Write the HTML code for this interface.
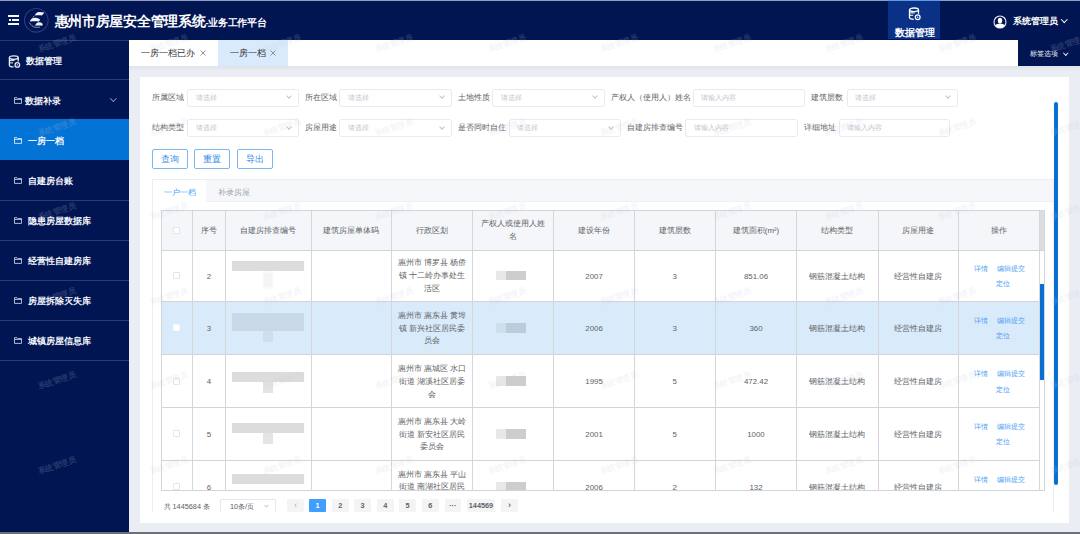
<!DOCTYPE html><html><head><meta charset="utf-8"><style>
*{box-sizing:border-box;margin:0;padding:0}
html,body{width:1080px;height:534px;overflow:hidden;background:#eaedf3;font-family:"Liberation Sans",sans-serif;color:#606266}
.a{position:absolute}
.nw{white-space:nowrap}
.mi{position:absolute;left:0;width:128.5px;height:40px;color:#f4f6fb;font-size:9px;font-weight:bold;white-space:nowrap}
.mi .t{position:absolute;left:27.5px;top:0.8px;line-height:40px}
.sep{position:absolute;left:0;width:128.5px;height:1px;background:#2a3a7a}
.fold{position:absolute;left:14px;top:17.3px;width:8px;height:7px}
.lbl{position:absolute;font-size:7.9px;line-height:18px;color:#606266;white-space:nowrap}
.inp{position:absolute;height:18px;border:1px solid #e8eaef;border-radius:2.5px;background:#fff;font-size:7.4px;line-height:16px;color:#c0c4cc;padding-left:7.8px;white-space:nowrap}
.chev{position:absolute;width:4px;height:4px;border-right:1px solid #c0c4cc;border-bottom:1px solid #c0c4cc;transform:rotate(45deg)}
.btn{position:absolute;top:149px;height:20px;border:1px solid #7db6ee;border-radius:2px;background:#fff;color:#2f8ae6;font-size:8.5px;line-height:18px;text-align:center}
.hl{position:absolute;height:1px;background:#d2d4d8}
.vl{position:absolute;width:1px;background:#d5d6da}
.cell{position:absolute;display:flex;align-items:center;justify-content:center;text-align:center;font-size:7.9px;line-height:12.9px;color:#606266;white-space:nowrap}
.pg{position:absolute;top:499px;height:12.5px;width:17px;background:#f4f4f5;border-radius:1px;font-size:7.3px;line-height:13.5px;text-align:center;color:#606266;font-weight:bold}
.lnk{color:#4ea0f5}
.cb{position:absolute;width:7px;height:7px;border:1px solid #e3e5ea;border-radius:1px;background:#fff}
</style></head><body>
<div class="a" style="left:0;top:0;width:1080px;height:40px;background:#011552"></div>
<div class="a" style="left:0;top:0;width:1080px;height:1px;background:#8f9cbd"></div>
<div class="a" style="left:8.4px;top:15.1px;width:10.8px;height:2.1px;background:#f4f6fd"></div>
<div class="a" style="left:8.4px;top:22.9px;width:10.8px;height:2.1px;background:#f4f6fd"></div>
<div class="a" style="left:9.3px;top:19px;width:1.7px;height:2.1px;background:#f4f6fd"></div>
<div class="a" style="left:12px;top:19px;width:7.2px;height:2.1px;background:#f4f6fd"></div>
<svg class="a" style="left:20px;top:4px" width="32" height="32" viewBox="0 0 32 32">
<circle cx="16.3" cy="16.3" r="11.8" fill="none" stroke="#2b3d80" stroke-width="1.1"/>
<path d="M14.8 11.6 C15.6 9.4 17 8.3 19 8.1 C20.8 8 22.6 8.2 24.2 8.6 C23.6 9.8 22.8 10.8 21.8 11.5 C19.5 11.2 17 11.2 14.8 11.6 Z" fill="#eef2fb"/>
<path d="M9.8 17.6 C10.6 15.3 12.2 14 14.5 13.8 C16.6 13.7 18.6 14.3 20 15.6 C19.8 16.6 19.4 17.2 18.8 17.5 C16 17 12.8 17 9.8 17.6 Z" fill="#f2f5fc"/>
<path d="M15.2 21.8 C15.8 19.6 17 18.4 18.8 18.3 C20.4 18.2 21.8 18.8 22.8 20 C22.8 20.8 22.5 21.4 22 21.7 C19.8 21.4 17.4 21.4 15.2 21.8 Z" fill="#e8edf8"/>
<path d="M14.2 11.8 C13.6 12.6 13.2 13.2 12.6 13.6" stroke="#aab6da" stroke-width="0.9" fill="none"/>
<path d="M9.4 18.6 C10.6 21 12.6 22.6 15 23.2 C16.6 23.5 18.4 23.4 20 23" stroke="#8e9cc8" stroke-width="0.9" fill="none"/>
</svg>
<div class="a nw" style="left:54.5px;top:13px;color:#fff;font-weight:bold;font-size:13.5px;letter-spacing:-0.28px;line-height:17px">惠州市房屋安全管理系统<span style="font-size:9.6px;letter-spacing:-0.3px">-业务工作平台</span></div>
<div class="a" style="left:888px;top:0;width:51.5px;height:39px;background:#0a3185"></div>
<div class="a" style="left:888px;top:0;width:51.5px;height:1px;background:#5f9be0"></div>
<svg class="a" style="left:907.5px;top:6.8px" width="14" height="14" viewBox="0 0 14 14">
<ellipse cx="6" cy="2.8" rx="4.5" ry="1.8" fill="none" stroke="#fff" stroke-width="1.3"/>
<path d="M1.5 2.8 V10.6 C1.5 11.6 3.4 12.3 5.8 12.4" fill="none" stroke="#fff" stroke-width="1.3"/>
<path d="M10.5 2.8 V6.8" fill="none" stroke="#fff" stroke-width="1.3"/>
<path d="M1.5 5.9 H6.8 M1.5 8.3 H5.2" fill="none" stroke="#fff" stroke-width="1"/>
<circle cx="9.7" cy="10.3" r="2.4" fill="none" stroke="#fff" stroke-width="1.2"/>
<circle cx="9.7" cy="10.3" r="0.7" fill="#fff"/>
</svg>
<div class="a nw" style="left:895px;top:27px;color:#fff;font-weight:bold;font-size:9.8px;line-height:12px">数据管理</div>
<svg class="a" style="left:993.3px;top:14.7px" width="14" height="14" viewBox="0 0 14 14">
<circle cx="7" cy="7" r="6" fill="none" stroke="#e9eefa" stroke-width="1.1"/>
<ellipse cx="7" cy="5.6" rx="2.2" ry="2.9" fill="#fff"/>
<path d="M2.2 10.8 C3 9.3 4.6 8.5 7 8.5 C9.4 8.5 11 9.3 11.8 10.8 C10.7 12.2 9 12.9 7 12.9 C5 12.9 3.3 12.2 2.2 10.8 Z" fill="#fff"/>
</svg>
<div class="a nw" style="left:1012.5px;top:15px;color:#fff;font-size:8.8px;line-height:12px;font-weight:bold">系统管理员</div>
<div class="a" style="left:1061.8px;top:17px;width:4.5px;height:4.5px;border-right:1.2px solid #fff;border-bottom:1.2px solid #fff;transform:rotate(45deg)"></div>
<div class="a" style="left:0;top:40px;width:129px;height:494px;background:#011552"></div>
<div class="a" style="left:0;top:39.6px;width:129px;height:1.2px;background:#283978"></div>
<svg class="a" style="left:7.5px;top:54.5px" width="13" height="13" viewBox="0 0 13 13">
<ellipse cx="5.8" cy="2.6" rx="4.4" ry="1.7" fill="none" stroke="#eef1fa" stroke-width="1.3"/>
<path d="M1.4 2.6 V10.2 C1.4 11.1 3.2 11.8 5.6 11.9" fill="none" stroke="#eef1fa" stroke-width="1.3"/>
<path d="M10.2 2.6 V6.6" fill="none" stroke="#eef1fa" stroke-width="1.3"/>
<path d="M1.4 5.6 H6.5 M1.4 7.9 H5" fill="none" stroke="#eef1fa" stroke-width="1"/>
<circle cx="9.3" cy="9.9" r="2.3" fill="none" stroke="#eef1fa" stroke-width="1.2"/>
<circle cx="9.3" cy="9.9" r="0.7" fill="#eef1fa"/>
</svg>
<div class="a nw" style="left:25.5px;top:55px;color:#f4f6fb;font-size:9px;font-weight:bold;line-height:12px">数据管理</div>
<div class="sep" style="top:79px"></div>
<div class="mi" style="top:80px"><svg class="fold" viewBox="0 0 8 7"><path d="M0.5 0.7 H3 L3.8 1.6 H7.5 V6.4 H0.5 Z M0.5 2.4 H7.5" fill="none" stroke="#cdd4e8" stroke-width="0.85"/></svg><div class="t" style="left:25px">数据补录</div></div>
<div class="a" style="left:110.5px;top:95.6px;width:4.6px;height:4.6px;border-right:1.3px solid #8795cc;border-bottom:1.3px solid #8795cc;transform:rotate(45deg)"></div>
<div class="sep" style="top:118.5px"></div>
<div class="a" style="left:0;top:119px;width:128.5px;height:41px;background:#0373d5"></div>
<div class="mi" style="top:120px"><svg class="fold" viewBox="0 0 8 7"><path d="M0.5 0.7 H3 L3.8 1.6 H7.5 V6.4 H0.5 Z M0.5 2.4 H7.5" fill="none" stroke="#e8f0fb" stroke-width="0.85"/></svg><div class="t">一房一档</div></div>
<div class="mi" style="top:160px"><svg class="fold" viewBox="0 0 8 7"><path d="M0.5 0.7 H3 L3.8 1.6 H7.5 V6.4 H0.5 Z M0.5 2.4 H7.5" fill="none" stroke="#cdd4e8" stroke-width="0.85"/></svg><div class="t">自建房台账</div></div>
<div class="sep" style="top:199.5px"></div>
<div class="mi" style="top:200px"><svg class="fold" viewBox="0 0 8 7"><path d="M0.5 0.7 H3 L3.8 1.6 H7.5 V6.4 H0.5 Z M0.5 2.4 H7.5" fill="none" stroke="#cdd4e8" stroke-width="0.85"/></svg><div class="t">隐患房屋数据库</div></div>
<div class="sep" style="top:239.5px"></div>
<div class="mi" style="top:240px"><svg class="fold" viewBox="0 0 8 7"><path d="M0.5 0.7 H3 L3.8 1.6 H7.5 V6.4 H0.5 Z M0.5 2.4 H7.5" fill="none" stroke="#cdd4e8" stroke-width="0.85"/></svg><div class="t">经营性自建房库</div></div>
<div class="sep" style="top:279.5px"></div>
<div class="mi" style="top:280px"><svg class="fold" viewBox="0 0 8 7"><path d="M0.5 0.7 H3 L3.8 1.6 H7.5 V6.4 H0.5 Z M0.5 2.4 H7.5" fill="none" stroke="#cdd4e8" stroke-width="0.85"/></svg><div class="t">房屋拆除灭失库</div></div>
<div class="sep" style="top:319.5px"></div>
<div class="mi" style="top:320px"><svg class="fold" viewBox="0 0 8 7"><path d="M0.5 0.7 H3 L3.8 1.6 H7.5 V6.4 H0.5 Z M0.5 2.4 H7.5" fill="none" stroke="#cdd4e8" stroke-width="0.85"/></svg><div class="t">城镇房屋信息库</div></div>
<div class="sep" style="top:359.5px"></div>
<div class="a" style="left:129px;top:40px;width:889px;height:26px;background:#fff"></div>
<div class="a nw" style="left:141px;top:47px;font-size:9px;line-height:12px;color:#303133">一房一档已办</div>
<svg class="a" style="left:200px;top:50px" width="6" height="6" viewBox="0 0 6 6"><path d="M0.5 0.5 L5.5 5.5 M5.5 0.5 L0.5 5.5" stroke="#777" stroke-width="0.8"/></svg>
<div class="a" style="left:218px;top:40px;width:70px;height:26px;background:#d8eafb"></div>
<div class="a nw" style="left:229.5px;top:47px;font-size:9px;line-height:12px;color:#303133">一房一档</div>
<svg class="a" style="left:269.5px;top:50px" width="6" height="6" viewBox="0 0 6 6"><path d="M0.5 0.5 L5.5 5.5 M5.5 0.5 L0.5 5.5" stroke="#777" stroke-width="0.8"/></svg>
<div class="a" style="left:1018px;top:40px;width:62px;height:26px;background:#011552"></div>
<div class="a nw" style="left:1030px;top:49px;font-size:6.8px;line-height:10px;color:#e8ecf5">标签选项</div>
<div class="a" style="left:1063.8px;top:50.8px;width:3.5px;height:3.5px;border-right:1px solid #e8ecf5;border-bottom:1px solid #e8ecf5;transform:rotate(45deg)"></div>
<div class="a" style="left:129px;top:66px;width:951px;height:466px;background:#eaedf3"></div>
<div class="a" style="left:129px;top:66px;width:951px;height:5px;background:linear-gradient(#dfe2e9,#eaedf3)"></div>
<div class="a" style="left:140px;top:77px;width:929px;height:446px;background:#fff"></div>
<div class="a" style="left:0;top:532px;width:1080px;height:2px;background:#6b6f78"></div>
<div class="lbl" style="left:152px;top:88.7px">所属区域</div>
<div class="inp" style="left:187px;top:88.7px;width:112.3px">请选择<div class="chev" style="right:7px;top:4.5px"></div></div>
<div class="lbl" style="left:305px;top:88.7px">所在区域</div>
<div class="inp" style="left:339.4px;top:88.7px;width:112.3px">请选择<div class="chev" style="right:7px;top:4.5px"></div></div>
<div class="lbl" style="left:457.8px;top:88.7px">土地性质</div>
<div class="inp" style="left:492.4px;top:88.7px;width:112.6px">请选择<div class="chev" style="right:7px;top:4.5px"></div></div>
<div class="lbl" style="left:611px;top:88.7px">产权人（使用人）姓名</div>
<div class="inp" style="left:692.7px;top:88.7px;width:112.6px">请输入内容</div>
<div class="lbl" style="left:811.3px;top:88.7px">建筑层数</div>
<div class="inp" style="left:846.5px;top:88.7px;width:111.5px">请选择<div class="chev" style="right:7px;top:4.5px"></div></div>
<div class="lbl" style="left:152px;top:119px">结构类型</div>
<div class="inp" style="left:187px;top:119px;width:112.3px">请选择<div class="chev" style="right:7px;top:4.5px"></div></div>
<div class="lbl" style="left:305px;top:119px">房屋用途</div>
<div class="inp" style="left:339.4px;top:119px;width:112.3px">请选择<div class="chev" style="right:7px;top:4.5px"></div></div>
<div class="lbl" style="left:457.8px;top:119px">是否同时自住</div>
<div class="inp" style="left:508.7px;top:119px;width:112px">请选择<div class="chev" style="right:7px;top:4.5px"></div></div>
<div class="lbl" style="left:626.7px;top:119px">自建房排查编号</div>
<div class="inp" style="left:685.3px;top:119px;width:112.3px">请输入内容</div>
<div class="lbl" style="left:803.6px;top:119px">详细地址</div>
<div class="inp" style="left:838.5px;top:119px;width:111.7px">请输入内容</div>
<div class="btn" style="left:152px;width:35.5px">查询</div>
<div class="btn" style="left:194.2px;width:35.5px">重置</div>
<div class="btn" style="left:237.2px;width:35.5px">导出</div>
<div class="a" style="left:152px;top:179px;width:902px;height:333px;border:1px solid #eceef2;border-bottom:none"></div>
<div class="a" style="left:153px;top:180px;width:900px;height:21.5px;background:#f5f7fa;border-bottom:1px solid #eef0f3"></div>
<div class="a" style="left:153px;top:180px;width:53px;height:22px;background:#fff"></div>
<div class="a nw" style="left:164px;top:187px;font-size:7.9px;line-height:11px;color:#409eff">一户一档</div>
<div class="a nw" style="left:218px;top:187px;font-size:7.9px;line-height:11px;color:#a0a3a8">补录房屋</div>
<div class="a" style="left:161.1px;top:210.2px;width:883.4px;height:40.10000000000002px;background:#f5f6f9"></div>
<div class="a" style="left:161.1px;top:301.4px;width:878.6px;height:53.200000000000045px;background:#d9ebfb"></div>
<div class="a" style="left:1039.7px;top:210.2px;width:4.7999999999999545px;height:40.10000000000002px;background:#dcdde0"></div>
<div class="a" style="left:1039.7px;top:250.3px;width:4.7999999999999545px;height:240.59999999999997px;background:#fff"></div>
<div class="a" style="left:1040px;top:283.7px;width:3.8px;height:96px;background:#0a6fd3;border-radius:0"></div>
<div class="cb" style="left:172.6px;top:226.7px"></div>
<div class="cell" style="left:192.3px;top:210.2px;width:33.39999999999998px;height:40.10000000000002px;padding-top:1.5px">序号</div>
<div class="cell" style="left:225.7px;top:210.2px;width:85.30000000000001px;height:40.10000000000002px;padding-top:1.5px">自建房排查编号</div>
<div class="cell" style="left:311px;top:210.2px;width:80.69999999999999px;height:40.10000000000002px;padding-top:1.5px">建筑房屋单体码</div>
<div class="cell" style="left:391.7px;top:210.2px;width:80.69999999999999px;height:40.10000000000002px;padding-top:1.5px">行政区划</div>
<div class="cell" style="left:472.4px;top:210.2px;width:81.30000000000007px;height:40.10000000000002px;padding-top:1.5px">产权人或使用人姓<br>名</div>
<div class="cell" style="left:553.7px;top:210.2px;width:80.69999999999993px;height:40.10000000000002px;padding-top:1.5px">建设年份</div>
<div class="cell" style="left:634.4px;top:210.2px;width:80.80000000000007px;height:40.10000000000002px;padding-top:1.5px">建筑层数</div>
<div class="cell" style="left:715.2px;top:210.2px;width:81.59999999999991px;height:40.10000000000002px;padding-top:1.5px">建筑面积(m²)</div>
<div class="cell" style="left:796.8px;top:210.2px;width:81.20000000000005px;height:40.10000000000002px;padding-top:1.5px">结构类型</div>
<div class="cell" style="left:878px;top:210.2px;width:80.5px;height:40.10000000000002px;padding-top:1.5px">房屋用途</div>
<div class="cell" style="left:958.5px;top:210.2px;width:81.20000000000005px;height:40.10000000000002px;padding-top:1.5px">操作</div>
<div class="a" style="left:161.1px;top:250.3px;width:883.4px;height:240.59999999999997px;overflow:hidden">
<div class="cb" style="left:11.5px;top:22.049999999999983px;"></div>
<div class="a" style="left:71.30000000000001px;top:10.399999999999977px;width:71.5px;height:10px;background:#dcdcdc;filter:blur(0.5px)"></div>
<div class="a" style="left:101.9px;top:21.399999999999977px;width:10.5px;height:16px;background:#f4f4f4;filter:blur(0.8px)"></div>
<div class="cell" style="left:230.6px;top:0.0px;width:80.69999999999999px;height:51.099999999999966px;padding-top:2px">惠州市 博罗县 杨侨<br>镇 十二岭办事处生<br>活区</div>
<div class="a" style="left:335.20000000000005px;top:20.94999999999998px;width:9.7px;height:9.2px;background:#e8e8e8;filter:blur(0.5px)"></div>
<div class="a" style="left:344.9px;top:20.94999999999998px;width:20.4px;height:9.2px;background:#cdcdcd;filter:blur(0.5px)"></div>
<div class="cell" style="left:31.200000000000017px;top:0.0px;width:33.39999999999998px;height:51.099999999999966px;padding-top:2.5px">2</div>
<div class="cell" style="left:392.6px;top:0.0px;width:80.69999999999993px;height:51.099999999999966px;padding-top:2.5px">2007</div>
<div class="cell" style="left:473.29999999999995px;top:0.0px;width:80.80000000000007px;height:51.099999999999966px;padding-top:2.5px">3</div>
<div class="cell" style="left:554.1px;top:0.0px;width:81.59999999999991px;height:51.099999999999966px;padding-top:2.5px">851.06</div>
<div class="cell" style="left:635.6999999999999px;top:0.0px;width:81.20000000000005px;height:51.099999999999966px;padding-top:2.5px">钢筋混凝土结构</div>
<div class="cell" style="left:716.9px;top:0.0px;width:80.5px;height:51.099999999999966px;padding-top:2.5px">经营性自建房</div>
<div class="a nw lnk" style="left:812.9px;top:12.549999999999983px;font-size:6.8px;line-height:11px">详情</div>
<div class="a nw lnk" style="left:835.8px;top:12.549999999999983px;font-size:6.8px;line-height:11px">编辑提交</div>
<div class="a nw lnk" style="left:834.6px;top:28.049999999999983px;font-size:6.8px;line-height:11px">定位</div>
<div class="cb" style="left:11.5px;top:74.19999999999999px;background:#fff;border-color:#f4f8fc"></div>
<div class="a" style="left:71.30000000000001px;top:62.599999999999966px;width:71.5px;height:18.5px;background:#c9d8e6;filter:blur(0.5px)"></div>
<div class="a" style="left:101.9px;top:81.09999999999997px;width:10.5px;height:11px;background:#c9d8e6;opacity:0.6;filter:blur(0.6px)"></div>
<div class="cell" style="left:230.6px;top:51.099999999999966px;width:80.69999999999999px;height:53.200000000000045px;padding-top:2px">惠州市 惠东县 黄埠<br>镇 新兴社区居民委<br>员会</div>
<div class="a" style="left:335.20000000000005px;top:73.1px;width:9.7px;height:9.2px;background:#cfdeec;filter:blur(0.5px)"></div>
<div class="a" style="left:344.9px;top:73.1px;width:20.4px;height:9.2px;background:#bcccdc;filter:blur(0.5px)"></div>
<div class="cell" style="left:31.200000000000017px;top:51.099999999999966px;width:33.39999999999998px;height:53.200000000000045px;padding-top:2.5px">3</div>
<div class="cell" style="left:392.6px;top:51.099999999999966px;width:80.69999999999993px;height:53.200000000000045px;padding-top:2.5px">2006</div>
<div class="cell" style="left:473.29999999999995px;top:51.099999999999966px;width:80.80000000000007px;height:53.200000000000045px;padding-top:2.5px">3</div>
<div class="cell" style="left:554.1px;top:51.099999999999966px;width:81.59999999999991px;height:53.200000000000045px;padding-top:2.5px">360</div>
<div class="cell" style="left:635.6999999999999px;top:51.099999999999966px;width:81.20000000000005px;height:53.200000000000045px;padding-top:2.5px">钢筋混凝土结构</div>
<div class="cell" style="left:716.9px;top:51.099999999999966px;width:80.5px;height:53.200000000000045px;padding-top:2.5px">经营性自建房</div>
<div class="a nw lnk" style="left:812.9px;top:64.69999999999999px;font-size:6.8px;line-height:11px">详情</div>
<div class="a nw lnk" style="left:835.8px;top:64.69999999999999px;font-size:6.8px;line-height:11px">编辑提交</div>
<div class="a nw lnk" style="left:834.6px;top:80.19999999999999px;font-size:6.8px;line-height:11px">定位</div>
<div class="cb" style="left:11.5px;top:127.30000000000001px;"></div>
<div class="a" style="left:71.30000000000001px;top:121.69999999999999px;width:71.5px;height:10px;background:#dcdcdc;filter:blur(0.5px)"></div>
<div class="a" style="left:101.9px;top:131.7px;width:10.5px;height:11px;background:#dcdcdc;opacity:0.75;filter:blur(0.6px)"></div>
<div class="cell" style="left:230.6px;top:104.30000000000001px;width:80.69999999999999px;height:53.0px;padding-top:2px">惠州市 惠城区 水口<br>街道 湖溪社区居委<br>会</div>
<div class="a" style="left:335.20000000000005px;top:126.20000000000002px;width:9.7px;height:9.2px;background:#e8e8e8;filter:blur(0.5px)"></div>
<div class="a" style="left:344.9px;top:126.20000000000002px;width:20.4px;height:9.2px;background:#cdcdcd;filter:blur(0.5px)"></div>
<div class="cell" style="left:31.200000000000017px;top:104.30000000000001px;width:33.39999999999998px;height:53.0px;padding-top:2.5px">4</div>
<div class="cell" style="left:392.6px;top:104.30000000000001px;width:80.69999999999993px;height:53.0px;padding-top:2.5px">1995</div>
<div class="cell" style="left:473.29999999999995px;top:104.30000000000001px;width:80.80000000000007px;height:53.0px;padding-top:2.5px">5</div>
<div class="cell" style="left:554.1px;top:104.30000000000001px;width:81.59999999999991px;height:53.0px;padding-top:2.5px">472.42</div>
<div class="cell" style="left:635.6999999999999px;top:104.30000000000001px;width:81.20000000000005px;height:53.0px;padding-top:2.5px">钢筋混凝土结构</div>
<div class="cell" style="left:716.9px;top:104.30000000000001px;width:80.5px;height:53.0px;padding-top:2.5px">经营性自建房</div>
<div class="a nw lnk" style="left:812.9px;top:117.80000000000001px;font-size:6.8px;line-height:11px">详情</div>
<div class="a nw lnk" style="left:835.8px;top:117.80000000000001px;font-size:6.8px;line-height:11px">编辑提交</div>
<div class="a nw lnk" style="left:834.6px;top:133.3px;font-size:6.8px;line-height:11px">定位</div>
<div class="cb" style="left:11.5px;top:180.2px;"></div>
<div class="a" style="left:71.30000000000001px;top:172.89999999999998px;width:71.5px;height:10px;background:#dcdcdc;filter:blur(0.5px)"></div>
<div class="a" style="left:101.9px;top:182.89999999999998px;width:10.5px;height:11px;background:#dcdcdc;opacity:0.75;filter:blur(0.6px)"></div>
<div class="cell" style="left:230.6px;top:157.3px;width:80.69999999999999px;height:52.799999999999955px;padding-top:2px">惠州市 惠东县 大岭<br>街道 新安社区居民<br>委员会</div>
<div class="a" style="left:335.20000000000005px;top:179.1px;width:9.7px;height:9.2px;background:#e8e8e8;filter:blur(0.5px)"></div>
<div class="a" style="left:344.9px;top:179.1px;width:20.4px;height:9.2px;background:#cdcdcd;filter:blur(0.5px)"></div>
<div class="cell" style="left:31.200000000000017px;top:157.3px;width:33.39999999999998px;height:52.799999999999955px;padding-top:2.5px">5</div>
<div class="cell" style="left:392.6px;top:157.3px;width:80.69999999999993px;height:52.799999999999955px;padding-top:2.5px">2001</div>
<div class="cell" style="left:473.29999999999995px;top:157.3px;width:80.80000000000007px;height:52.799999999999955px;padding-top:2.5px">5</div>
<div class="cell" style="left:554.1px;top:157.3px;width:81.59999999999991px;height:52.799999999999955px;padding-top:2.5px">1000</div>
<div class="cell" style="left:635.6999999999999px;top:157.3px;width:81.20000000000005px;height:52.799999999999955px;padding-top:2.5px">钢筋混凝土结构</div>
<div class="cell" style="left:716.9px;top:157.3px;width:80.5px;height:52.799999999999955px;padding-top:2.5px">经营性自建房</div>
<div class="a nw lnk" style="left:812.9px;top:170.7px;font-size:6.8px;line-height:11px">详情</div>
<div class="a nw lnk" style="left:835.8px;top:170.7px;font-size:6.8px;line-height:11px">编辑提交</div>
<div class="a nw lnk" style="left:834.6px;top:186.2px;font-size:6.8px;line-height:11px">定位</div>
<div class="cb" style="left:11.5px;top:233.09999999999997px;"></div>
<div class="a" style="left:71.30000000000001px;top:224.09999999999997px;width:71.5px;height:10px;background:#dcdcdc;filter:blur(0.5px)"></div>
<div class="cell" style="left:230.6px;top:210.09999999999997px;width:80.69999999999999px;height:53.0px;padding-top:2px">惠州市 惠东县 平山<br>街道 南湖社区居民<br>委员会</div>
<div class="a" style="left:335.20000000000005px;top:231.99999999999997px;width:9.7px;height:9.2px;background:#e8e8e8;filter:blur(0.5px)"></div>
<div class="a" style="left:344.9px;top:231.99999999999997px;width:20.4px;height:9.2px;background:#cdcdcd;filter:blur(0.5px)"></div>
<div class="cell" style="left:31.200000000000017px;top:210.09999999999997px;width:33.39999999999998px;height:53.0px;padding-top:2.5px">6</div>
<div class="cell" style="left:392.6px;top:210.09999999999997px;width:80.69999999999993px;height:53.0px;padding-top:2.5px">2006</div>
<div class="cell" style="left:473.29999999999995px;top:210.09999999999997px;width:80.80000000000007px;height:53.0px;padding-top:2.5px">2</div>
<div class="cell" style="left:554.1px;top:210.09999999999997px;width:81.59999999999991px;height:53.0px;padding-top:2.5px">132</div>
<div class="cell" style="left:635.6999999999999px;top:210.09999999999997px;width:81.20000000000005px;height:53.0px;padding-top:2.5px">钢筋混凝土结构</div>
<div class="cell" style="left:716.9px;top:210.09999999999997px;width:80.5px;height:53.0px;padding-top:2.5px">经营性自建房</div>
<div class="a nw lnk" style="left:812.9px;top:223.59999999999997px;font-size:6.8px;line-height:11px">详情</div>
<div class="a nw lnk" style="left:835.8px;top:223.59999999999997px;font-size:6.8px;line-height:11px">编辑提交</div>
<div class="a nw lnk" style="left:834.6px;top:239.09999999999997px;font-size:6.8px;line-height:11px">定位</div>
</div>
<div class="hl" style="left:161.1px;top:209.7px;width:883.4px"></div>
<div class="hl" style="left:161.1px;top:249.8px;width:883.4px"></div>
<div class="hl" style="left:161.1px;top:300.9px;width:878.6px"></div>
<div class="hl" style="left:161.1px;top:354.1px;width:878.6px"></div>
<div class="hl" style="left:161.1px;top:407.1px;width:878.6px"></div>
<div class="hl" style="left:161.1px;top:459.9px;width:878.6px"></div>
<div class="hl" style="left:161.1px;top:490.4px;width:883.4px"></div>
<div class="vl" style="left:160.6px;top:210.2px;height:280.7px"></div>
<div class="vl" style="left:191.8px;top:210.2px;height:280.7px"></div>
<div class="vl" style="left:225.2px;top:210.2px;height:280.7px"></div>
<div class="vl" style="left:310.5px;top:210.2px;height:280.7px"></div>
<div class="vl" style="left:391.2px;top:210.2px;height:280.7px"></div>
<div class="vl" style="left:471.9px;top:210.2px;height:280.7px"></div>
<div class="vl" style="left:553.2px;top:210.2px;height:280.7px"></div>
<div class="vl" style="left:633.9px;top:210.2px;height:280.7px"></div>
<div class="vl" style="left:714.7px;top:210.2px;height:280.7px"></div>
<div class="vl" style="left:796.3px;top:210.2px;height:280.7px"></div>
<div class="vl" style="left:877.5px;top:210.2px;height:280.7px"></div>
<div class="vl" style="left:958.0px;top:210.2px;height:280.7px"></div>
<div class="vl" style="left:1039.2px;top:210.2px;height:280.7px"></div>
<div class="vl" style="left:1044.0px;top:210.2px;height:280.7px"></div>
<div class="a" style="left:1053.6px;top:102.4px;width:4px;height:383px;background:#0a6fd3;border-radius:2px"></div>
<div class="a nw" style="left:163.5px;top:501px;font-size:7.3px;line-height:11px;color:#606266">共 1445684 条</div>
<div class="a" style="left:219.5px;top:498.6px;width:56px;height:13px;border:1px solid #e4e7ed;border-bottom:none;border-radius:2px 2px 0 0"></div>
<div class="a nw" style="left:230px;top:501px;font-size:7.3px;line-height:11px;color:#606266">10条/页</div>
<div class="chev" style="left:265px;top:504px;width:3px;height:3px"></div>
<div class="pg" style="left:287.3px;width:16.6px;color:#a8abb2;font-size:9px;font-weight:normal;">‹</div>
<div class="pg" style="left:309.2px;width:16.6px;background:#409eff;color:#fff;">1</div>
<div class="pg" style="left:332.1px;width:16.6px;">2</div>
<div class="pg" style="left:354.3px;width:16.6px;">3</div>
<div class="pg" style="left:377.1px;width:16.6px;">4</div>
<div class="pg" style="left:399.3px;width:16.6px;">5</div>
<div class="pg" style="left:422.1px;width:16.6px;">6</div>
<div class="pg" style="left:444.5px;width:16.6px;">···</div>
<div class="pg" style="left:466.9px;width:28.2px;">144569</div>
<div class="pg" style="left:501.1px;width:16.6px;color:#303133;font-size:9px;font-weight:normal;">›</div>
<div class="a nw" style="left:31.6px;top:38.5px;width:50px;text-align:center;font-size:8px;font-weight:bold;line-height:10px;color:rgba(198,202,222,0.2);transform:rotate(-18deg)">系统管理员</div>
<div class="a nw" style="left:144.1px;top:38.5px;width:50px;text-align:center;font-size:8px;font-weight:bold;line-height:10px;color:rgba(198,202,222,0.2);transform:rotate(-18deg)">系统管理员</div>
<div class="a nw" style="left:256.6px;top:38.5px;width:50px;text-align:center;font-size:8px;font-weight:bold;line-height:10px;color:rgba(198,202,222,0.2);transform:rotate(-18deg)">系统管理员</div>
<div class="a nw" style="left:369.1px;top:38.5px;width:50px;text-align:center;font-size:8px;font-weight:bold;line-height:10px;color:rgba(198,202,222,0.2);transform:rotate(-18deg)">系统管理员</div>
<div class="a nw" style="left:481.6px;top:38.5px;width:50px;text-align:center;font-size:8px;font-weight:bold;line-height:10px;color:rgba(198,202,222,0.2);transform:rotate(-18deg)">系统管理员</div>
<div class="a nw" style="left:594.1px;top:38.5px;width:50px;text-align:center;font-size:8px;font-weight:bold;line-height:10px;color:rgba(198,202,222,0.2);transform:rotate(-18deg)">系统管理员</div>
<div class="a nw" style="left:706.6px;top:38.5px;width:50px;text-align:center;font-size:8px;font-weight:bold;line-height:10px;color:rgba(198,202,222,0.2);transform:rotate(-18deg)">系统管理员</div>
<div class="a nw" style="left:819.1px;top:38.5px;width:50px;text-align:center;font-size:8px;font-weight:bold;line-height:10px;color:rgba(198,202,222,0.2);transform:rotate(-18deg)">系统管理员</div>
<div class="a nw" style="left:931.6px;top:38.5px;width:50px;text-align:center;font-size:8px;font-weight:bold;line-height:10px;color:rgba(198,202,222,0.2);transform:rotate(-18deg)">系统管理员</div>
<div class="a nw" style="left:1044.1px;top:38.5px;width:50px;text-align:center;font-size:8px;font-weight:bold;line-height:10px;color:rgba(198,202,222,0.2);transform:rotate(-18deg)">系统管理员</div>
<div class="a nw" style="left:31.6px;top:122.9px;width:50px;text-align:center;font-size:8px;font-weight:bold;line-height:10px;color:rgba(198,202,222,0.2);transform:rotate(-18deg)">系统管理员</div>
<div class="a nw" style="left:144.1px;top:122.9px;width:50px;text-align:center;font-size:8px;font-weight:bold;line-height:10px;color:rgba(198,202,222,0.2);transform:rotate(-18deg)">系统管理员</div>
<div class="a nw" style="left:256.6px;top:122.9px;width:50px;text-align:center;font-size:8px;font-weight:bold;line-height:10px;color:rgba(198,202,222,0.2);transform:rotate(-18deg)">系统管理员</div>
<div class="a nw" style="left:369.1px;top:122.9px;width:50px;text-align:center;font-size:8px;font-weight:bold;line-height:10px;color:rgba(198,202,222,0.2);transform:rotate(-18deg)">系统管理员</div>
<div class="a nw" style="left:481.6px;top:122.9px;width:50px;text-align:center;font-size:8px;font-weight:bold;line-height:10px;color:rgba(198,202,222,0.2);transform:rotate(-18deg)">系统管理员</div>
<div class="a nw" style="left:594.1px;top:122.9px;width:50px;text-align:center;font-size:8px;font-weight:bold;line-height:10px;color:rgba(198,202,222,0.2);transform:rotate(-18deg)">系统管理员</div>
<div class="a nw" style="left:706.6px;top:122.9px;width:50px;text-align:center;font-size:8px;font-weight:bold;line-height:10px;color:rgba(198,202,222,0.2);transform:rotate(-18deg)">系统管理员</div>
<div class="a nw" style="left:819.1px;top:122.9px;width:50px;text-align:center;font-size:8px;font-weight:bold;line-height:10px;color:rgba(198,202,222,0.2);transform:rotate(-18deg)">系统管理员</div>
<div class="a nw" style="left:931.6px;top:122.9px;width:50px;text-align:center;font-size:8px;font-weight:bold;line-height:10px;color:rgba(198,202,222,0.2);transform:rotate(-18deg)">系统管理员</div>
<div class="a nw" style="left:1044.1px;top:122.9px;width:50px;text-align:center;font-size:8px;font-weight:bold;line-height:10px;color:rgba(198,202,222,0.2);transform:rotate(-18deg)">系统管理员</div>
<div class="a nw" style="left:31.6px;top:207.3px;width:50px;text-align:center;font-size:8px;font-weight:bold;line-height:10px;color:rgba(198,202,222,0.2);transform:rotate(-18deg)">系统管理员</div>
<div class="a nw" style="left:144.1px;top:207.3px;width:50px;text-align:center;font-size:8px;font-weight:bold;line-height:10px;color:rgba(198,202,222,0.2);transform:rotate(-18deg)">系统管理员</div>
<div class="a nw" style="left:256.6px;top:207.3px;width:50px;text-align:center;font-size:8px;font-weight:bold;line-height:10px;color:rgba(198,202,222,0.2);transform:rotate(-18deg)">系统管理员</div>
<div class="a nw" style="left:369.1px;top:207.3px;width:50px;text-align:center;font-size:8px;font-weight:bold;line-height:10px;color:rgba(198,202,222,0.2);transform:rotate(-18deg)">系统管理员</div>
<div class="a nw" style="left:481.6px;top:207.3px;width:50px;text-align:center;font-size:8px;font-weight:bold;line-height:10px;color:rgba(198,202,222,0.2);transform:rotate(-18deg)">系统管理员</div>
<div class="a nw" style="left:594.1px;top:207.3px;width:50px;text-align:center;font-size:8px;font-weight:bold;line-height:10px;color:rgba(198,202,222,0.2);transform:rotate(-18deg)">系统管理员</div>
<div class="a nw" style="left:706.6px;top:207.3px;width:50px;text-align:center;font-size:8px;font-weight:bold;line-height:10px;color:rgba(198,202,222,0.2);transform:rotate(-18deg)">系统管理员</div>
<div class="a nw" style="left:819.1px;top:207.3px;width:50px;text-align:center;font-size:8px;font-weight:bold;line-height:10px;color:rgba(198,202,222,0.2);transform:rotate(-18deg)">系统管理员</div>
<div class="a nw" style="left:931.6px;top:207.3px;width:50px;text-align:center;font-size:8px;font-weight:bold;line-height:10px;color:rgba(198,202,222,0.2);transform:rotate(-18deg)">系统管理员</div>
<div class="a nw" style="left:1044.1px;top:207.3px;width:50px;text-align:center;font-size:8px;font-weight:bold;line-height:10px;color:rgba(198,202,222,0.2);transform:rotate(-18deg)">系统管理员</div>
<div class="a nw" style="left:31.6px;top:291.70000000000005px;width:50px;text-align:center;font-size:8px;font-weight:bold;line-height:10px;color:rgba(198,202,222,0.2);transform:rotate(-18deg)">系统管理员</div>
<div class="a nw" style="left:144.1px;top:291.70000000000005px;width:50px;text-align:center;font-size:8px;font-weight:bold;line-height:10px;color:rgba(198,202,222,0.2);transform:rotate(-18deg)">系统管理员</div>
<div class="a nw" style="left:256.6px;top:291.70000000000005px;width:50px;text-align:center;font-size:8px;font-weight:bold;line-height:10px;color:rgba(198,202,222,0.2);transform:rotate(-18deg)">系统管理员</div>
<div class="a nw" style="left:369.1px;top:291.70000000000005px;width:50px;text-align:center;font-size:8px;font-weight:bold;line-height:10px;color:rgba(198,202,222,0.2);transform:rotate(-18deg)">系统管理员</div>
<div class="a nw" style="left:481.6px;top:291.70000000000005px;width:50px;text-align:center;font-size:8px;font-weight:bold;line-height:10px;color:rgba(198,202,222,0.2);transform:rotate(-18deg)">系统管理员</div>
<div class="a nw" style="left:594.1px;top:291.70000000000005px;width:50px;text-align:center;font-size:8px;font-weight:bold;line-height:10px;color:rgba(198,202,222,0.2);transform:rotate(-18deg)">系统管理员</div>
<div class="a nw" style="left:706.6px;top:291.70000000000005px;width:50px;text-align:center;font-size:8px;font-weight:bold;line-height:10px;color:rgba(198,202,222,0.2);transform:rotate(-18deg)">系统管理员</div>
<div class="a nw" style="left:819.1px;top:291.70000000000005px;width:50px;text-align:center;font-size:8px;font-weight:bold;line-height:10px;color:rgba(198,202,222,0.2);transform:rotate(-18deg)">系统管理员</div>
<div class="a nw" style="left:931.6px;top:291.70000000000005px;width:50px;text-align:center;font-size:8px;font-weight:bold;line-height:10px;color:rgba(198,202,222,0.2);transform:rotate(-18deg)">系统管理员</div>
<div class="a nw" style="left:1044.1px;top:291.70000000000005px;width:50px;text-align:center;font-size:8px;font-weight:bold;line-height:10px;color:rgba(198,202,222,0.2);transform:rotate(-18deg)">系统管理员</div>
<div class="a nw" style="left:31.6px;top:376.1px;width:50px;text-align:center;font-size:8px;font-weight:bold;line-height:10px;color:rgba(198,202,222,0.2);transform:rotate(-18deg)">系统管理员</div>
<div class="a nw" style="left:144.1px;top:376.1px;width:50px;text-align:center;font-size:8px;font-weight:bold;line-height:10px;color:rgba(198,202,222,0.2);transform:rotate(-18deg)">系统管理员</div>
<div class="a nw" style="left:256.6px;top:376.1px;width:50px;text-align:center;font-size:8px;font-weight:bold;line-height:10px;color:rgba(198,202,222,0.2);transform:rotate(-18deg)">系统管理员</div>
<div class="a nw" style="left:369.1px;top:376.1px;width:50px;text-align:center;font-size:8px;font-weight:bold;line-height:10px;color:rgba(198,202,222,0.2);transform:rotate(-18deg)">系统管理员</div>
<div class="a nw" style="left:481.6px;top:376.1px;width:50px;text-align:center;font-size:8px;font-weight:bold;line-height:10px;color:rgba(198,202,222,0.2);transform:rotate(-18deg)">系统管理员</div>
<div class="a nw" style="left:594.1px;top:376.1px;width:50px;text-align:center;font-size:8px;font-weight:bold;line-height:10px;color:rgba(198,202,222,0.2);transform:rotate(-18deg)">系统管理员</div>
<div class="a nw" style="left:706.6px;top:376.1px;width:50px;text-align:center;font-size:8px;font-weight:bold;line-height:10px;color:rgba(198,202,222,0.2);transform:rotate(-18deg)">系统管理员</div>
<div class="a nw" style="left:819.1px;top:376.1px;width:50px;text-align:center;font-size:8px;font-weight:bold;line-height:10px;color:rgba(198,202,222,0.2);transform:rotate(-18deg)">系统管理员</div>
<div class="a nw" style="left:931.6px;top:376.1px;width:50px;text-align:center;font-size:8px;font-weight:bold;line-height:10px;color:rgba(198,202,222,0.2);transform:rotate(-18deg)">系统管理员</div>
<div class="a nw" style="left:1044.1px;top:376.1px;width:50px;text-align:center;font-size:8px;font-weight:bold;line-height:10px;color:rgba(198,202,222,0.2);transform:rotate(-18deg)">系统管理员</div>
<div class="a nw" style="left:31.6px;top:460.5px;width:50px;text-align:center;font-size:8px;font-weight:bold;line-height:10px;color:rgba(198,202,222,0.2);transform:rotate(-18deg)">系统管理员</div>
<div class="a nw" style="left:144.1px;top:460.5px;width:50px;text-align:center;font-size:8px;font-weight:bold;line-height:10px;color:rgba(198,202,222,0.2);transform:rotate(-18deg)">系统管理员</div>
<div class="a nw" style="left:256.6px;top:460.5px;width:50px;text-align:center;font-size:8px;font-weight:bold;line-height:10px;color:rgba(198,202,222,0.2);transform:rotate(-18deg)">系统管理员</div>
<div class="a nw" style="left:369.1px;top:460.5px;width:50px;text-align:center;font-size:8px;font-weight:bold;line-height:10px;color:rgba(198,202,222,0.2);transform:rotate(-18deg)">系统管理员</div>
<div class="a nw" style="left:481.6px;top:460.5px;width:50px;text-align:center;font-size:8px;font-weight:bold;line-height:10px;color:rgba(198,202,222,0.2);transform:rotate(-18deg)">系统管理员</div>
<div class="a nw" style="left:594.1px;top:460.5px;width:50px;text-align:center;font-size:8px;font-weight:bold;line-height:10px;color:rgba(198,202,222,0.2);transform:rotate(-18deg)">系统管理员</div>
<div class="a nw" style="left:706.6px;top:460.5px;width:50px;text-align:center;font-size:8px;font-weight:bold;line-height:10px;color:rgba(198,202,222,0.2);transform:rotate(-18deg)">系统管理员</div>
<div class="a nw" style="left:819.1px;top:460.5px;width:50px;text-align:center;font-size:8px;font-weight:bold;line-height:10px;color:rgba(198,202,222,0.2);transform:rotate(-18deg)">系统管理员</div>
<div class="a nw" style="left:931.6px;top:460.5px;width:50px;text-align:center;font-size:8px;font-weight:bold;line-height:10px;color:rgba(198,202,222,0.2);transform:rotate(-18deg)">系统管理员</div>
<div class="a nw" style="left:1044.1px;top:460.5px;width:50px;text-align:center;font-size:8px;font-weight:bold;line-height:10px;color:rgba(198,202,222,0.2);transform:rotate(-18deg)">系统管理员</div>
<div class="a nw" style="left:31.6px;top:544.9000000000001px;width:50px;text-align:center;font-size:8px;font-weight:bold;line-height:10px;color:rgba(198,202,222,0.2);transform:rotate(-18deg)">系统管理员</div>
<div class="a nw" style="left:144.1px;top:544.9000000000001px;width:50px;text-align:center;font-size:8px;font-weight:bold;line-height:10px;color:rgba(198,202,222,0.2);transform:rotate(-18deg)">系统管理员</div>
<div class="a nw" style="left:256.6px;top:544.9000000000001px;width:50px;text-align:center;font-size:8px;font-weight:bold;line-height:10px;color:rgba(198,202,222,0.2);transform:rotate(-18deg)">系统管理员</div>
<div class="a nw" style="left:369.1px;top:544.9000000000001px;width:50px;text-align:center;font-size:8px;font-weight:bold;line-height:10px;color:rgba(198,202,222,0.2);transform:rotate(-18deg)">系统管理员</div>
<div class="a nw" style="left:481.6px;top:544.9000000000001px;width:50px;text-align:center;font-size:8px;font-weight:bold;line-height:10px;color:rgba(198,202,222,0.2);transform:rotate(-18deg)">系统管理员</div>
<div class="a nw" style="left:594.1px;top:544.9000000000001px;width:50px;text-align:center;font-size:8px;font-weight:bold;line-height:10px;color:rgba(198,202,222,0.2);transform:rotate(-18deg)">系统管理员</div>
<div class="a nw" style="left:706.6px;top:544.9000000000001px;width:50px;text-align:center;font-size:8px;font-weight:bold;line-height:10px;color:rgba(198,202,222,0.2);transform:rotate(-18deg)">系统管理员</div>
<div class="a nw" style="left:819.1px;top:544.9000000000001px;width:50px;text-align:center;font-size:8px;font-weight:bold;line-height:10px;color:rgba(198,202,222,0.2);transform:rotate(-18deg)">系统管理员</div>
<div class="a nw" style="left:931.6px;top:544.9000000000001px;width:50px;text-align:center;font-size:8px;font-weight:bold;line-height:10px;color:rgba(198,202,222,0.2);transform:rotate(-18deg)">系统管理员</div>
<div class="a nw" style="left:1044.1px;top:544.9000000000001px;width:50px;text-align:center;font-size:8px;font-weight:bold;line-height:10px;color:rgba(198,202,222,0.2);transform:rotate(-18deg)">系统管理员</div>
</body></html>
